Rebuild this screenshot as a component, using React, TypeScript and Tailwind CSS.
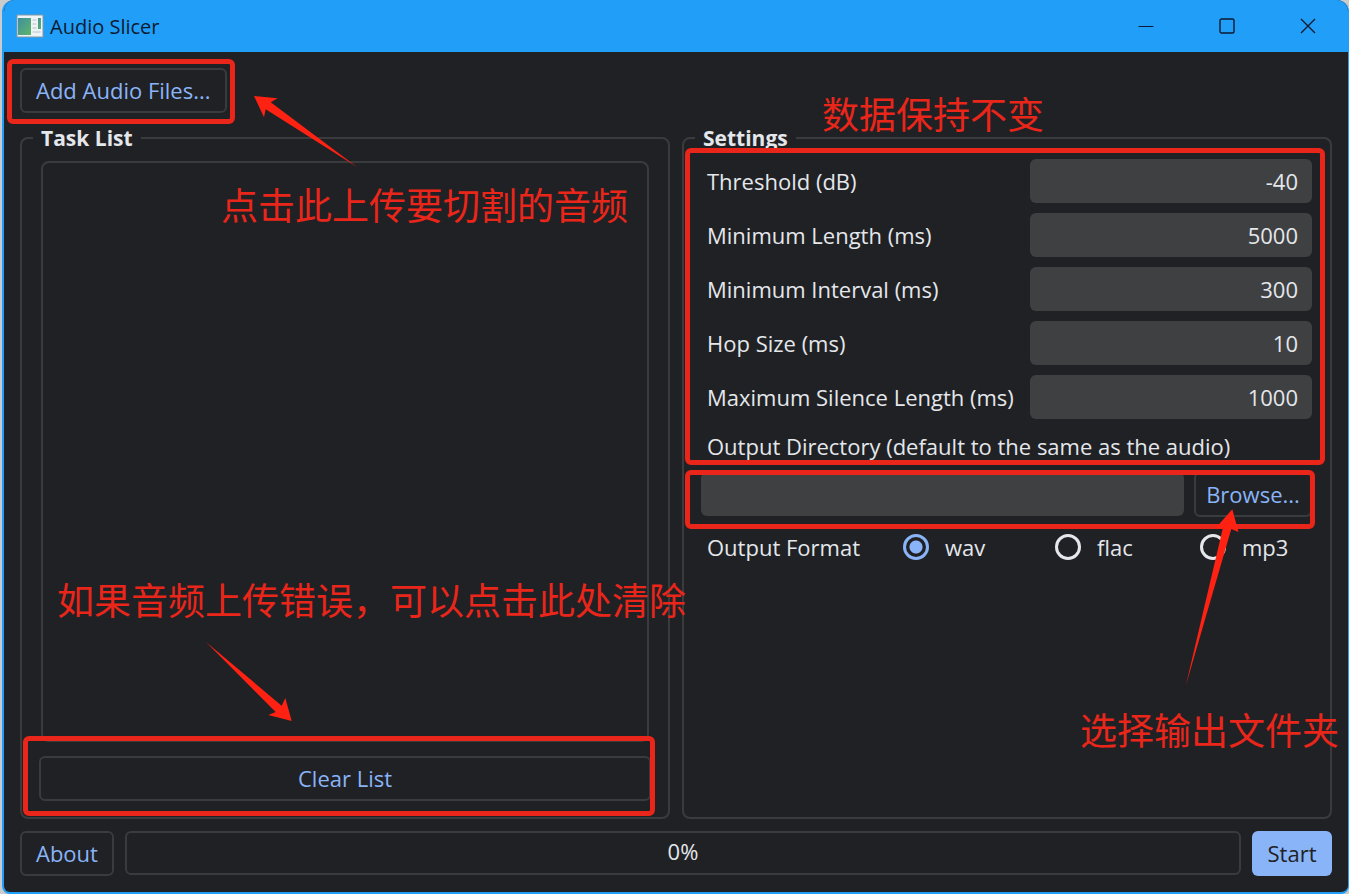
import { useState, type ReactNode } from 'react'

const settings = [
  { id: 'threshold', label: 'Threshold (dB)', value: '-40' },
  { id: 'min-length', label: 'Minimum Length (ms)', value: '5000' },
  { id: 'min-interval', label: 'Minimum Interval (ms)', value: '300' },
  { id: 'hop-size', label: 'Hop Size (ms)', value: '10' },
  { id: 'max-silence', label: 'Maximum Silence Length (ms)', value: '1000' },
]

const formats = ['wav', 'flac', 'mp3']

const outlineButton =
  'h-[45px] shrink-0 rounded-md border-2 border-[#3a3b3d] pb-0.5 text-[#8ab4f8] hover:bg-[#2a2d33]'

function AppIcon() {
  return (
    <svg width="28" height="24" viewBox="0 0 28 24" aria-hidden="true">
      <defs>
        <linearGradient id="screen" x1="0" y1="0" x2="1" y2="1">
          <stop offset="0" stopColor="#3f8fa0" />
          <stop offset="1" stopColor="#5fb568" />
        </linearGradient>
      </defs>
      <rect x="1" y="1" width="26" height="22" fill="#eef3f5" stroke="#8397a5" />
      <rect x="2" y="4" width="13" height="17" fill="url(#screen)" />
      <rect x="22" y="4" width="3" height="11" fill="url(#screen)" />
      <path d="M16.5 6h4M16.5 10h4M16.5 14h4M16.5 18h8" stroke="#b9c3c9" />
    </svg>
  )
}

// Hand-drawn style frame laid over a control
function Frame({ className }: { className: string }) {
  return <div className={`pointer-events-none absolute z-10 rounded-md border-[5px] border-[#ea261b] ${className}`} />
}

function Note({ className, children }: { className: string; children: ReactNode }) {
  return (
    <p
      className={`pointer-events-none absolute z-20 whitespace-nowrap font-['Noto_Sans_CJK_SC',sans-serif] text-[37px] leading-[44px] text-[#ea261b] ${className}`}
    >
      {children}
    </p>
  )
}

export default function App() {
  const [format, setFormat] = useState('wav')

  return (
    <div className="flex h-screen bg-[#c9cbcd] pl-0.5 font-['Open_Sans','Noto_Sans',sans-serif] text-[22px] leading-[30px] text-[#e4e7eb]">
      <div className="flex min-w-0 flex-1 flex-col overflow-hidden rounded-t-xl rounded-b-lg border-r border-b-2 border-l-2 border-[#219ff8] bg-[#202124]">
        <header className="flex h-[52px] shrink-0 items-center bg-[#219ff8] pl-3 text-[#0b1a30]">
          <AppIcon />
          <h1 className="ml-1.5 flex-1 pt-0.5 text-[20px]">Audio Slicer</h1>
          <button aria-label="Minimize" className="flex h-full w-[81px] items-center justify-center">
            <svg width="16" height="16" viewBox="0 0 16 16" fill="none" stroke="currentColor">
              <path d="M0.5 8.5h15" />
            </svg>
          </button>
          <button aria-label="Maximize" className="flex h-full w-[81px] items-center justify-center">
            <svg width="16" height="16" viewBox="0 0 16 16" fill="none" stroke="currentColor" strokeWidth="1.4">
              <rect x="1" y="1" width="14" height="14" rx="1.5" />
            </svg>
          </button>
          <button aria-label="Close" className="flex h-full w-[81px] items-center justify-center">
            <svg width="16" height="16" viewBox="0 0 16 16" fill="none" stroke="currentColor" strokeWidth="1.4">
              <path d="M1 1l14 14M15 1L1 15" />
            </svg>
          </button>
        </header>

        <main className="flex min-h-0 flex-1 flex-col p-4">
          <div className="mb-2.5 flex">
            <div className="relative">
              <button className={`${outlineButton} px-3.5`}>Add Audio Files...</button>
              <Frame className="-top-[9px] -right-2 -bottom-[11px] -left-[13px]" />
            </div>
          </div>

          <div className="grid min-h-0 flex-1 grid-cols-2 gap-3">
            <div className="relative flex min-w-0">
              <fieldset className="flex min-w-0 flex-1 flex-col rounded-lg border-2 border-[#3a3b3d] px-[17px] pt-2 pb-4">
                <legend className="-ml-1.5 px-2 text-[21px] font-bold">Task List</legend>
                <div className="flex h-full flex-col">
                  <ul aria-label="Task List" className="mx-0.5 min-h-0 flex-1 rounded-lg border-2 border-[#3a3b3d]" />
                  <div className="relative mt-3.5 flex">
                    <button className={`${outlineButton} flex-1`}>Clear List</button>
                    <Frame className="-top-5 -right-1 -bottom-[15px] -left-4" />
                  </div>
                </div>
              </fieldset>
              <Note className="top-[59px] left-[201px]">点击此上传要切割的音频</Note>
              <svg
                className="pointer-events-none absolute -top-7 left-[234px] z-20 fill-[#ff2213]"
                width="104"
                height="74"
                viewBox="254 95 104 74"
              >
                <path d="M254 96l23.6 2.3l-6.9 4L357 167L265.7 109.3L264 117.3z" />
              </svg>
              <Note className="bottom-[198px] left-[37px]">如果音频上传错误，可以点击此处清除</Note>
              <svg
                className="pointer-events-none absolute bottom-[98px] left-[186px] z-20 fill-[#ff2213]"
                width="87"
                height="80"
                viewBox="206 641 87 80"
              >
                <path d="M206 642L281.7 705.7L285.3 698L291.7 721L268.3 715L275.7 712z" />
              </svg>
            </div>

            <div className="relative flex min-w-0">
              <fieldset className="min-w-0 flex-1 rounded-lg border-2 border-[#3a3b3d] pt-1.5 pr-[18px] pb-4 pl-[17px]">
                <legend className="-ml-1.5 px-2 text-[21px] font-bold">Settings</legend>
                <div className="relative flex flex-col gap-2.5">
                  {settings.map((s) => (
                    <div key={s.id} className="flex h-11 items-center">
                      <label htmlFor={s.id} className="flex-1 pl-1.5">
                        {s.label}
                      </label>
                      <input
                        id={s.id}
                        defaultValue={s.value}
                        className="h-full w-[282px] rounded-md bg-[#3f4042] px-3.5 text-right outline-none"
                      />
                    </div>
                  ))}
                  <Frame className="-top-[11px] -right-[13px] -bottom-[46px] -left-4" />
                </div>
                <label htmlFor="output-dir" className="mt-3 block pl-1.5">
                  Output Directory (default to the same as the audio)
                </label>
                <div className="relative mt-[11px] flex gap-2.5">
                  <input id="output-dir" className="h-11 min-w-0 flex-1 rounded-md bg-[#3f4042] px-3.5 outline-none" />
                  <button className={`${outlineButton} w-[118px]`}>Browse...</button>
                  <Frame className="-top-0.5 -right-[3px] -bottom-3 -left-4" />
                </div>
                <div
                  role="radiogroup"
                  aria-labelledby="format-label"
                  className="mt-[15px] grid grid-cols-[196px_152px_145px_1fr] items-center pl-1.5"
                >
                  <span id="format-label">Output Format</span>
                  {formats.map((f) => (
                    <label key={f} className="flex items-center gap-4">
                      <input
                        type="radio"
                        name="format"
                        value={f}
                        checked={format === f}
                        onChange={() => setFormat(f)}
                        className="size-[26px] appearance-none rounded-full border-[3px] border-[#e4e7eb] checked:border-[#8ab4f8] checked:bg-[radial-gradient(circle,#8ab4f8_6px,transparent_7px)]"
                      />
                      {f}
                    </label>
                  ))}
                </div>
              </fieldset>
              <Note className="-top-8 left-[140px]">数据保持不变</Note>
              <svg
                className="pointer-events-none absolute top-[386px] right-[93px] z-20 fill-[#ff2213]"
                width="54"
                height="178"
                viewBox="1185 509 54 178"
              >
                <path d="M1232.3 509.3L1238.5 532L1231.3 529L1185.7 686L1222.7 528.7L1216 527.7z" />
              </svg>
              <Note className="-right-[7px] bottom-[68px]">选择输出文件夹</Note>
            </div>
          </div>

          <footer className="mt-3 flex items-start gap-[11px]">
            <button className={`${outlineButton} px-3.5`}>About</button>
            <div
              role="progressbar"
              aria-label="Progress"
              aria-valuenow={0}
              aria-valuemin={0}
              aria-valuemax={100}
              className="flex h-11 flex-1 items-center justify-center rounded-md border-2 border-[#3a3b3d] pb-1"
            >
              0%
            </div>
            <button className="h-[45px] w-20 shrink-0 rounded-md bg-[#8ab4f8] pb-0.5 text-[#202124] hover:bg-[#9cc0fa]">
              Start
            </button>
          </footer>
        </main>
      </div>
    </div>
  )
}
